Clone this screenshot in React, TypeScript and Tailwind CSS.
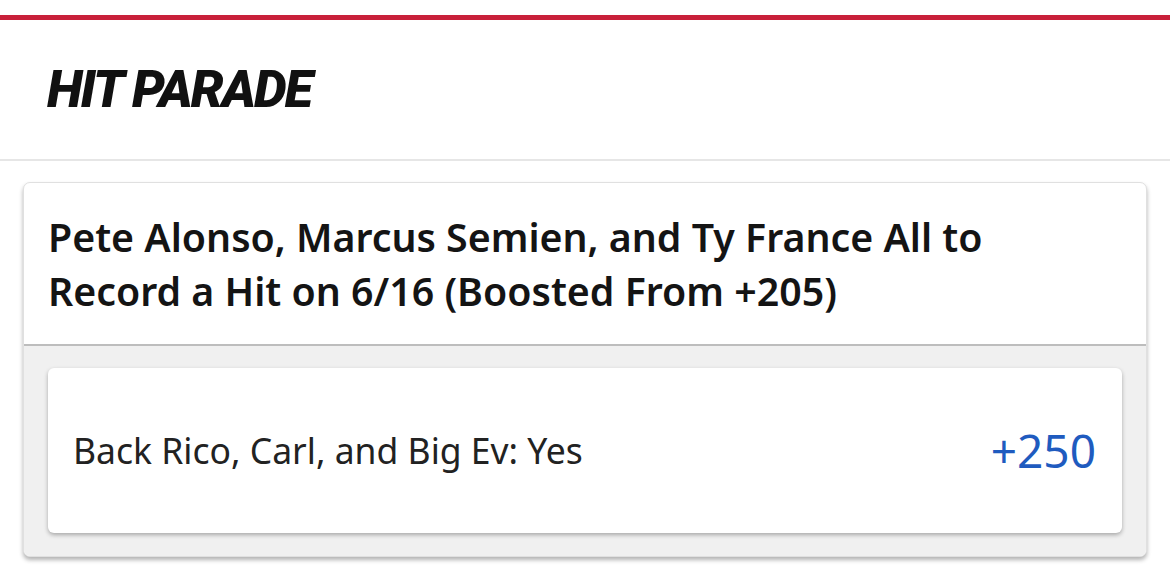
import React from 'react';

export default function App() {
  return (
    <div className="w-[1170px] h-[588px] bg-white overflow-hidden" style={{ fontFamily: '"Noto Sans", "Open Sans", sans-serif' }}>
      <div className="h-[15px] bg-white" />
      <div className="h-[5px] bg-[#c8203a]" />
      {/* section title */}
      <div className="h-[141px] flex items-center pl-[47px] border-b-2 border-[#e6e6e6]">
        <h1 className="text-[52px] font-black italic tracking-[-2px] text-[#111] leading-none" style={{ fontFamily: 'Roboto, sans-serif' }}>
          HIT PARADE
        </h1>
      </div>

      <div className="px-[23px] pt-[21px]">
        <div className="rounded-[7px] bg-white border border-[#e0e0e0] shadow-[0_3px_4px_rgba(0,0,0,0.3)] overflow-hidden">
          <div className="h-[163px] flex items-center pl-[24px] pr-[25px] border-b-2 border-[#bdbdbd]">
            <p className="max-w-[990px] text-[39.3px] font-semibold leading-[54px] text-[#141414]">
              Pete Alonso, Marcus Semien, and Ty France All to Record a Hit on 6/16 (Boosted From +205)
            </p>
          </div>
          <div className="bg-[#f0f0f0] px-[24px] pt-[22px] pb-[23px]">
            <div className="h-[165px] rounded-[6px] bg-white shadow-[0_2px_4px_rgba(0,0,0,0.3)] flex items-center justify-between pl-[25px] pr-[26px]">
              <span className="text-[35.5px] text-[#222]">Back Rico, Carl, and Big Ev: Yes</span>
              <span className="text-[46px] text-[#1f5bbf]">+250</span>
            </div>
          </div>
        </div>
      </div>
    </div>
  );
}
